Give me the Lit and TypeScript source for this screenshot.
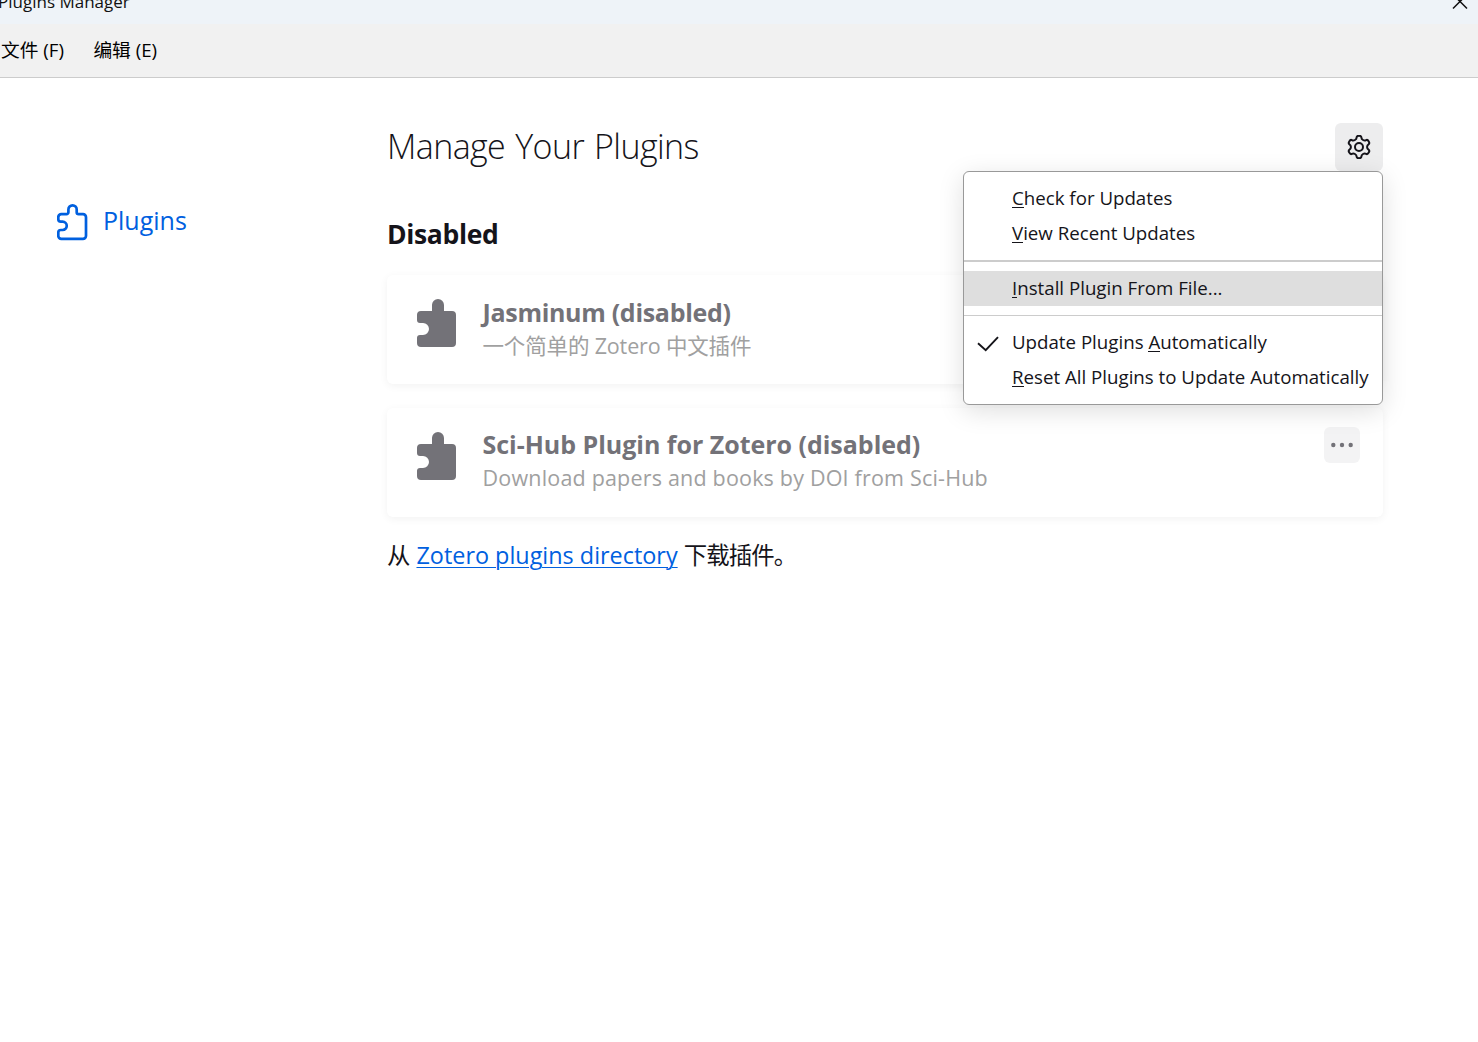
import { LitElement, html, css, svg, nothing } from "lit";
import { customElement } from "lit/decorators.js";

interface Plugin {
  name: string;
  description: string;
  tracking: string;
  descTracking: string;
  more: boolean;
}

interface MenuEntry {
  before: string;
  key: string;
  after: string;
  checked?: boolean;
  active?: boolean;
}

const PLUGINS: Plugin[] = [
  { name: "Jasminum (disabled)", description: "一个简单的 Zotero 中文插件", tracking: "-0.3px", descTracking: "-0.15px", more: false },
  { name: "Sci-Hub Plugin for Zotero (disabled)", description: "Download papers and books by DOI from Sci-Hub", tracking: "-0.02px", descTracking: "0.19px", more: true },
];

const MENU: MenuEntry[][] = [
  [
    { before: "", key: "C", after: "heck for Updates" },
    { before: "", key: "V", after: "iew Recent Updates" },
  ],
  [{ before: "", key: "I", after: "nstall Plugin From File...", active: true }],
  [
    { before: "Update Plugins ", key: "A", after: "utomatically", checked: true },
    { before: "", key: "R", after: "eset All Plugins to Update Automatically" },
  ],
];

/** Closed six-lobed outline around (12, 12), smoothed through midpoints. */
function gearPath(): string {
  const pts: [number, number][] = [];
  for (let k = 0; k < 6; k++) {
    for (const [offset, r] of [[-12, 11.5], [12, 11.5], [17, 8.3], [43, 8.3]]) {
      const a = ((k * 60 + offset - 90) * Math.PI) / 180;
      pts.push([12 + r * Math.cos(a), 12 + r * Math.sin(a)]);
    }
  }
  const mid = (a: [number, number], b: [number, number]) =>
    `${((a[0] + b[0]) / 2).toFixed(2)} ${((a[1] + b[1]) / 2).toFixed(2)}`;
  let d = `M${mid(pts[pts.length - 1], pts[0])}`;
  pts.forEach((p, i) => {
    d += `Q${p[0].toFixed(2)} ${p[1].toFixed(2)} ${mid(p, pts[(i + 1) % pts.length])}`;
  });
  return d + "Z";
}

const puzzleSolid = svg`<path d="M4.5 12H15.500V6a6 6 0 0 1 12 0v6h8a4 4 0 0 1 4 4v28a4 4 0 0 1-4 4h-31a4 4 0 0 1-4-4v-5a3 3 0 0 1 3-3H6.500a6 6 0 0 0 0-12H3.500a3 3 0 0 1-3-3V16a4 4 0 0 1 4-4Z"/>`;
const puzzleOutline = svg`<path d="M4.300 10.200H9.500a1.900 1.900 0 0 0 1.900-1.900V5.500a4.150 4.150 0 0 1 8.300 0V8.300a1.900 1.900 0 0 0 1.900 1.900H26a3 3 0 0 1 3 3V31.800a3 3 0 0 1-3 3H4.300a3 3 0 0 1-3-3V28.500a2.500 2.500 0 0 1 2.500-2.500H5.600a4.150 4.150 0 0 0 0-8.300H3.800a2.500 2.500 0 0 1-2.500-2.500V13.200a3 3 0 0 1 3-3Z"/>`;

@customElement("app-root")
export class AppRoot extends LitElement {
  static styles = css`
    :host {
      display: flex;
      flex-direction: column;
      height: 1042px;
      overflow: hidden;
      box-sizing: border-box;
      background: #fff;
      color: #15141a;
      font-family: "Open Sans", "Noto Sans CJK SC", sans-serif;
    }
    * { box-sizing: border-box; }
    svg { display: block; }
    .titlebar {
      flex: none;
      height: 24px;
      display: flex;
      justify-content: space-between;
      background: #eef3f8;
      color: #111;
    }
    .title {
      font-size: 17px;
      line-height: 24px;
      margin: -10px 0 0 -2px;
      white-space: nowrap;
    }
    .close { margin: -6px 10px 0 0; fill: none; stroke: #111; stroke-width: 1.5; }
    .menubar {
      flex: none;
      height: 54px;
      display: flex;
      gap: 29.500px;
      padding-left: 1px;
      background: #f1f1f1;
      border-bottom: 1px solid #ccc;
      font-size: 18.700px;
      line-height: 52px;
      color: #000;
      white-space: nowrap;
    }
    .body { flex: 1; display: flex; }
    .sidebar { flex: none; width: 387px; padding: 120px 0 0 57px; }
    .category {
      display: flex;
      align-items: center;
      gap: 15px;
      height: 48px;
      color: #0060df;
      font-size: 25px;
    }
    .category span { margin-top: -5px; }
    .category svg { fill: none; stroke: currentColor; stroke-width: 2.700; }
    .content { width: 996px; }
    .header {
      display: flex;
      justify-content: space-between;
      align-items: center;
      height: 48px;
      margin-top: 45px;
    }
    h1 { margin: -3px 0 0 0; font-weight: 300; font-size: 34px; line-height: 48px; letter-spacing: -0.6px; word-spacing: 1.800px; }
    .anchor { position: relative; width: 48px; height: 48px; }
    .gear {
      display: flex;
      align-items: center;
      justify-content: center;
      width: 48px;
      height: 48px;
      padding: 0;
      border: 0;
      border-radius: 6px;
      background: #ededee;
    }
    .gear svg { fill: none; stroke: #15141a; stroke-width: 2; }
    .menu {
      position: absolute;
      z-index: 2;
      top: 48px;
      right: 0;
      width: 420px;
      height: 234px;
      border: 1px solid #999;
      border-radius: 6px;
      background: #fff;
      box-shadow: 0 6px 26px rgba(0, 0, 0, 0.13);
      padding-top: 9px;
      font-size: 18.700px;
      line-height: 35px;
      color: #15141a;
    }
    .item { display: flex; height: 35px; white-space: pre; }
    .item.active { background: #dedede; }
    .mark { flex: none; width: 48px; padding: 9px 0 0 12px; }
    .mark svg { fill: none; stroke: #15141a; stroke-width: 1.900; }
    .label { margin-top: -1px; }
    .key { box-shadow: inset 0 -1px 0 #15141a; display: inline-block; line-height: 21px; }
    .sep { height: 2px; margin: 9px 0; background: #ccc; }
    .sep.thin { height: 1px; }
    h2 { margin: 39px 0 0; font-size: 26.500px; line-height: 48px; font-weight: 700; letter-spacing: -0.35px; }
    .cards { display: flex; flex-direction: column; gap: 24px; margin-top: 17px; }
    .card {
      display: flex;
      height: 109px;
      padding: 24px 23px 0 29px;
      border-radius: 6px;
      background: #fff;
      box-shadow: 0 2px 8px rgba(0, 0, 0, 0.055);
    }
    .card .icon { fill: #737278; flex: none; }
    .text { flex: 1; margin-left: 25.500px; white-space: nowrap; }
    .name { font-weight: 700; font-size: 25px; line-height: 32px; color: #737278; margin-top: -3px; }
    .card + .card .name { margin-top: -4px; margin-bottom: 2px; }
    .desc { font-size: 21.500px; line-height: 32px; color: #a0a0a0; margin-top: 2px; }
    .more {
      display: flex;
      align-items: center;
      justify-content: center;
      width: 36px;
      height: 36px;
      margin-top: -5px;
      padding: 0;
      border: 0;
      border-radius: 6px;
      background: #f3f3f4;
      fill: #737278;
    }
    .footer { margin: 21px 0 0; font-size: 23.400px; line-height: 34px; white-space: nowrap; }
    .footer span { letter-spacing: -0.9px; }
    a { color: #0060df; text-decoration: underline; text-decoration-thickness: 1px; text-underline-offset: 3px; }
  `;

  private renderItem(e: MenuEntry) {
    return html`<div class="item ${e.active ? "active" : ""}">
      <span class="mark">${e.checked
        ? html`<svg width="24" height="20" viewBox="0 0 24 20"><path d="M2 9.200l7.700 7L22 3.200" /></svg>`
        : nothing}</span><span class="label">${e.before}<span class="key">${e.key}</span>${e.after}</span>
    </div>`;
  }

  private renderCard(p: Plugin) {
    return html`<div class="card">
      <svg class="icon" width="41" height="48" viewBox="-0.5 0 41 48">${puzzleSolid}</svg>
      <div class="text">
        <div class="name" style="letter-spacing:${p.tracking}">${p.name}</div>
        <div class="desc" style="letter-spacing:${p.descTracking}">${p.description}</div>
      </div>
      ${p.more
        ? html`<button class="more"><svg width="24" height="6" viewBox="0 0 24 6"><circle cx="3.300" cy="3" r="2.200" /><circle cx="12" cy="3" r="2.200" /><circle cx="20.700" cy="3" r="2.200" /></svg></button>`
        : nothing}
    </div>`;
  }

  render() {
    return html`
      <div class="titlebar">
        <div class="title">Plugins Manager</div>
        <svg class="close" width="16" height="16" viewBox="0 0 16 16"><path d="M1 0.500L15 14.500M15 0.500L1 14.500" /></svg>
      </div>
      <div class="menubar"><span>文件 (F)</span><span>编辑 (E)</span></div>
      <div class="body">
        <div class="sidebar">
          <div class="category">
            <svg width="31" height="37" viewBox="0 0 31 37">${puzzleOutline}</svg>
            <span>Plugins</span>
          </div>
        </div>
        <div class="content">
          <div class="header">
            <h1>Manage Your Plugins</h1>
            <div class="anchor">
              <button class="gear">
                <svg width="24" height="24" viewBox="0 0 24 24"><path d=${gearPath()} /><circle cx="12" cy="12" r="4" /></svg>
              </button>
              <div class="menu">
                ${MENU.map((group, i) => html`${i ? html`<div class="sep ${i === 2 ? "thin" : ""}"></div>` : nothing}${group.map((e) => this.renderItem(e))}`)}
              </div>
            </div>
          </div>
          <h2>Disabled</h2>
          <div class="cards">${PLUGINS.map((p) => this.renderCard(p))}</div>
          <p class="footer">从 <a>Zotero plugins directory</a> <span>下载插件。</span></p>
        </div>
      </div>
    `;
  }
}
